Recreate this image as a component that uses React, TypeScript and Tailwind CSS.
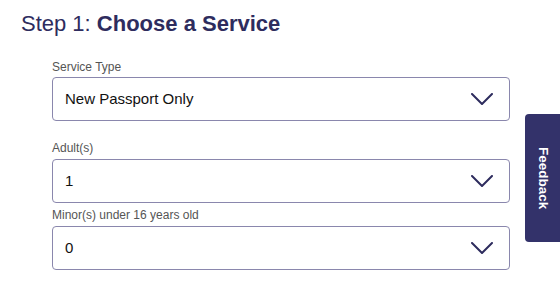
import React from 'react';

const font = { fontFamily: '"Liberation Sans", Arial, sans-serif' };

const Chevron: React.FC = () => (
  <svg width="22" height="12" viewBox="0 0 22 12" fill="none" className="shrink-0">
    <polyline points="1,1 11,11 21,1" stroke="#2e2c5e" strokeWidth="2" strokeLinecap="round" strokeLinejoin="round" />
  </svg>
);

const SelectBox: React.FC<{ value: string }> = ({ value }) => (
  <div className="h-[44px] w-full flex items-center justify-between pl-[12px] pr-[16px] border border-[#8a87ad] rounded-[4px] bg-white">
    <span className="text-[15px] text-[#111]">{value}</span>
    <Chevron />
  </div>
);

const App: React.FC = () => {
  return (
    <div className="relative w-[560px] h-[285px] bg-white overflow-hidden" style={font}>
      <div className="pl-[21px] pt-[11px]">
        <h1 className="text-[22px] leading-[26px] text-[#2e2c5e]">
          Step 1: <span className="font-bold">Choose a Service</span>
        </h1>
        <div className="ml-[31px] w-[458px] mt-[23px]">
          <label className="block text-[12px] leading-[14px] text-[#555] mb-[3px]">Service Type</label>
          <SelectBox value="New Passport Only" />
          <label className="block text-[12px] leading-[14px] text-[#555] mt-[20px] mb-[4px]">Adult(s)</label>
          <SelectBox value="1" />
          <label className="block text-[12px] leading-[14px] text-[#555] mt-[5px] mb-[4px]">Minor(s) under 16 years old</label>
          <SelectBox value="0" />
        </div>
      </div>
      <div className="absolute right-0 top-[114px] w-[35px] h-[128px] bg-[#33326a] rounded-l-[4px] flex items-center justify-center">
        <span className="text-white text-[13.5px] font-bold [writing-mode:vertical-rl]">Feedback</span>
      </div>
    </div>
  );
};

export default App;
